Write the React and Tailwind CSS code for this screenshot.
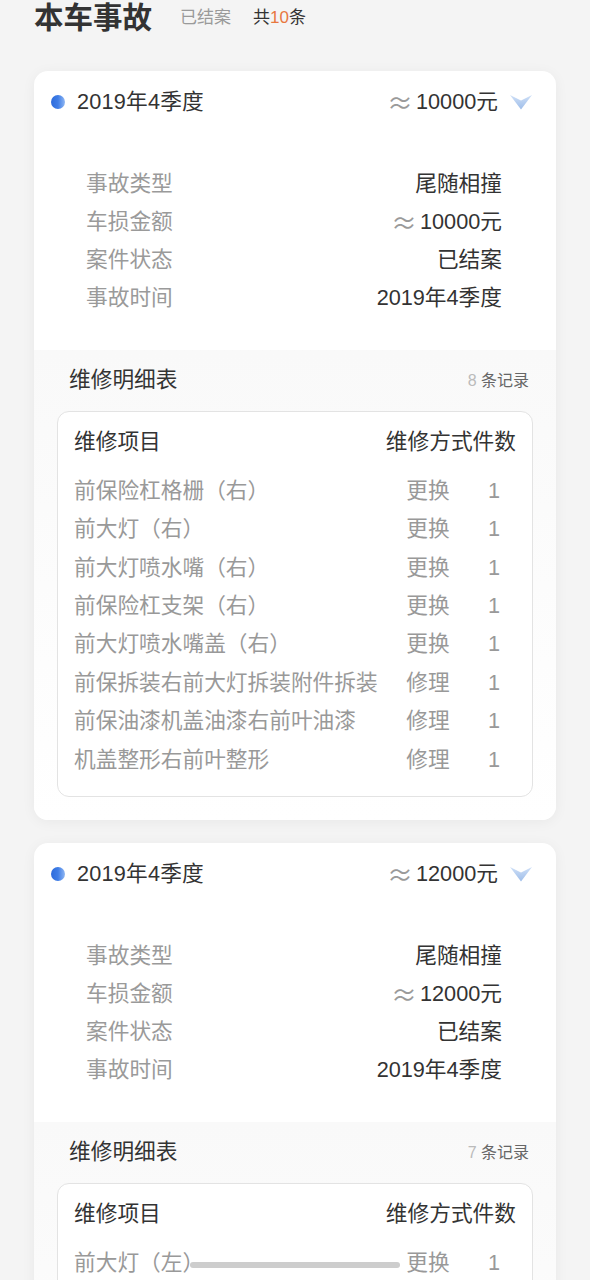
import React from "react";

const accidents = [
  {
    id: 1,
    period: "2019年4季度",
    amount: "10000元",
    type: "尾随相撞",
    status: "已结案",
    items: [
      ["前保险杠格栅（右）", "更换", 1],
      ["前大灯（右）", "更换", 1],
      ["前大灯喷水嘴（右）", "更换", 1],
      ["前保险杠支架（右）", "更换", 1],
      ["前大灯喷水嘴盖（右）", "更换", 1],
      ["前保拆装右前大灯拆装附件拆装", "修理", 1],
      ["前保油漆机盖油漆右前叶油漆", "修理", 1],
      ["机盖整形右前叶整形", "修理", 1],
    ],
  },
  {
    id: 2,
    period: "2019年4季度",
    amount: "12000元",
    type: "尾随相撞",
    status: "已结案",
    items: [
      ["前大灯（左）", "更换", 1],
      ["前保险杠格栅（左）", "更换", 1],
      ["前大灯喷水嘴（左）", "更换", 1],
      ["前保险杠支架（左）", "更换", 1],
      ["前保拆装左前大灯拆装", "修理", 1],
      ["前保油漆左前叶油漆", "修理", 1],
      ["左前叶整形", "修理", 1],
    ],
  },
];

function Chevron() {
  return (
    <svg width="22" height="16" viewBox="0 0 22 16">
      <defs>
        <linearGradient id="chev" x1="0" y1="0" x2="0" y2="1">
          <stop offset="0" stopColor="#cfe0f7" />
          <stop offset="1" stopColor="#9ebde9" />
        </linearGradient>
      </defs>
      <polygon points="0,1 11,6.5 22,1 11,15.5" fill="url(#chev)" />
    </svg>
  );
}

function Approx() {
  return (
    <span className="mr-[3px] font-['Noto_Sans_CJK_SC',sans-serif] text-[26px] leading-none text-[#9a9a9a]">≈</span>
  );
}

function AccidentCard({ data }) {
  const info = [
    ["事故类型", data.type],
    ["车损金额", <><Approx />{data.amount}</>],
    ["案件状态", data.status],
    ["事故时间", data.period],
  ];

  return (
    <section className="mx-[34px] overflow-hidden rounded-[14px] bg-white shadow-[0_2px_14px_rgba(0,0,0,0.05)]">
      <div className="flex h-[62px] items-center pl-[17px] pr-[24px]">
        <span className="h-[14px] w-[14px] rounded-full bg-linear-to-r from-[#2d6bdc] via-[#3f7de6] to-[#8fb6f2]" />
        <span className="ml-[12px] text-[21.7px] tracking-[0.2px] text-[#333]">{data.period}</span>
        <span className="ml-auto flex items-center text-[21.7px] text-[#333]">
          <Approx />
          {data.amount}
        </span>
        <span className="ml-[12px] flex items-center">
          <Chevron />
        </span>
      </div>

      <div className="pb-[33px] pl-[52px] pr-[54px] pt-[32px]">
        {info.map(([label, value]) => (
          <div key={label} className="flex h-[38px] items-center justify-between text-[21.7px]">
            <span className="text-[#9a9a9a]">{label}</span>
            <span className="flex items-center text-[#333]">{value}</span>
          </div>
        ))}
      </div>

      <div className="bg-linear-to-b from-[#f9f9f9] via-[#fcfcfc] to-white px-[23px] pb-[23px]">
        <div className="flex h-[61px] items-center justify-between pl-[12px] pr-[4px]">
          <span className="text-[21.7px] text-[#333]">维修明细表</span>
          <span className="text-[16px] text-[#666]">
            <span className="text-[#bbb]">{data.items.length}</span> 条记录
          </span>
        </div>

        <div className="rounded-[12px] border border-[#e3e3e3] bg-white px-[16px] pb-[17px]">
          <div className="flex h-[60px] items-center text-[21.7px] text-[#333]">
            <span className="flex-1">维修项目</span>
            <span>维修方式件数</span>
          </div>
          {data.items.map(([name, method, count], i) => (
            <div key={i} className="flex h-[38.4px] items-center text-[21.7px] text-[#999]">
              <span className="flex-1 whitespace-nowrap">{name}</span>
              <span className="w-[88px] text-center">{method}</span>
              <span className="w-[44px] text-center">{count}</span>
            </div>
          ))}
        </div>
      </div>
    </section>
  );
}

export default function App() {
  return (
    <div className="relative min-h-screen bg-[#f4f4f4] pb-10 font-['Liberation_Sans','Noto_Sans_CJK_SC',sans-serif]">
      <header className="flex h-9 items-center px-[34px]">
        <h1 className="text-[29.5px] font-bold leading-9 text-[#333]">本车事故</h1>
        <span className="ml-[28px] text-[17px] text-[#9a9a9a]">已结案</span>
        <span className="ml-[22px] text-[17px] text-[#333]">
          共<span className="text-[#e8773f]">10</span>条
        </span>
      </header>

      <div className="mt-[35px] flex flex-col gap-[23px]">
        {accidents.map((a) => (
          <AccidentCard key={a.id} data={a} />
        ))}
      </div>

      <div className="fixed left-1/2 top-[1262px] h-[6px] w-[210px] -translate-x-1/2 rounded-full bg-[#cdcdcd]" />
    </div>
  );
}
